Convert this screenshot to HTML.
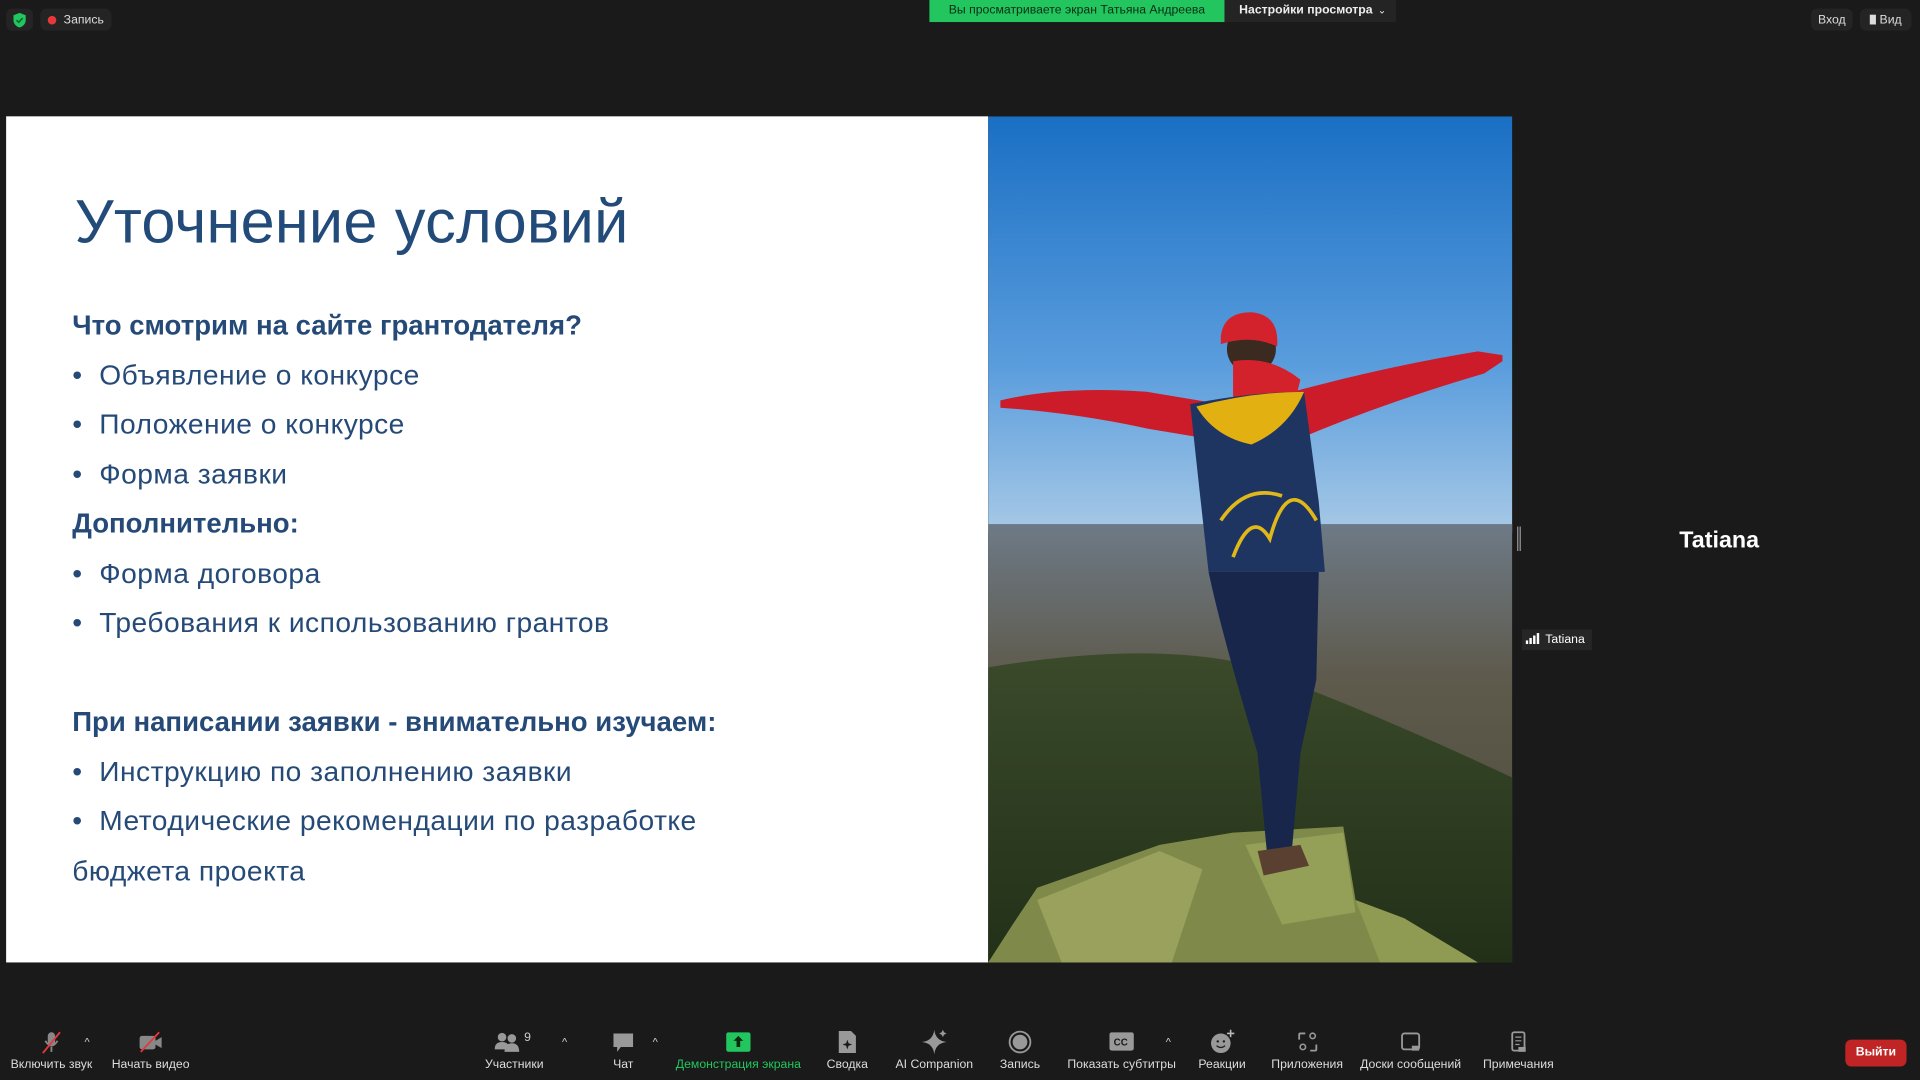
<!DOCTYPE html>
<html><head><meta charset="utf-8"><style>
html,body{margin:0;padding:0;background:#1a1a1a;overflow:hidden;width:1920px;height:1080px}
#w{position:absolute;left:0;top:0;width:1568px;height:882px;transform:scale(1.22449);transform-origin:0 0;font-family:"Liberation Sans","DejaVu Sans",sans-serif;color:#fff}
.abs{position:absolute}
.pill{position:absolute;background:#242424;border-radius:5px;font-size:10px;color:#ddd;display:flex;align-items:center}
.slide{position:absolute;left:5px;top:95px;width:802px;height:691px;background:#fff;color:#254a78}
.t{position:absolute;left:54px;white-space:nowrap}
.h{font-weight:bold;font-size:22.5px;letter-spacing:0}
.i{font-size:23px;letter-spacing:0.4px}
.tb{position:absolute;top:838px;height:44px;text-align:center;font-size:10px;color:#ddd;white-space:nowrap}
.tb .ic{height:26px;display:flex;justify-content:center;align-items:center}
.car{position:absolute;top:846px;font-size:9px;color:#ccc}
</style></head><body><div id="w">
<div class="pill" style="left:5px;top:7px;width:22px;height:18px;justify-content:center"><svg width="12" height="13" viewBox="0 0 12 13"><path d="M6 0.5L11 2.5V6.5C11 9.5 8.5 11.8 6 12.5C3.5 11.8 1 9.5 1 6.5V2.5Z" fill="#22c55e"/><path d="M3.5 6.5L5.3 8.2L8.5 4.8" stroke="#063" stroke-width="1.3" fill="none"/></svg></div>
<div class="pill" style="left:33px;top:7px;width:58px;height:18px"><span style="width:7px;height:7px;border-radius:50%;background:#e5383b;margin:0 6px 0 6px"></span>Запись</div>
<div class="abs" style="left:759px;top:0;width:241px;height:18px;background:#22c55e;color:#0b2e14;font-size:10px;text-align:center;line-height:18px">Вы просматриваете экран Татьяна Андреева</div>
<div class="abs" style="left:1000px;top:0;width:140px;height:18px;background:#242424;font-size:10px;line-height:18px;font-weight:bold;color:#eee;padding-left:12px;box-sizing:border-box">Настройки просмотра<span style="position:absolute;right:8px;font-weight:normal;font-size:8px">⌄</span></div>
<div class="pill" style="left:1479px;top:7px;width:34px;height:18px;justify-content:center">Вход</div>
<div class="pill" style="left:1519px;top:7px;width:42px;height:18px;justify-content:center"><span style="display:inline-block;width:5px;height:8px;background:#ddd;margin-right:3px"></span>Вид</div>
<div class="slide">
<div class="t" style="left:56px;top:57px;font-size:50px;letter-spacing:0.2px;color:#234b7a">Уточнение условий</div>
<div class="t h" style="top:158px">Что смотрим на сайте грантодателя?</div>
<div class="t i" style="top:198px">•&nbsp;&nbsp;Объявление о конкурсе</div>
<div class="t i" style="top:238px">•&nbsp;&nbsp;Положение о конкурсе</div>
<div class="t i" style="top:279px">•&nbsp;&nbsp;Форма заявки</div>
<div class="t h" style="top:320px">Дополнительно:</div>
<div class="t i" style="top:360px">•&nbsp;&nbsp;Форма договора</div>
<div class="t i" style="top:400px">•&nbsp;&nbsp;Требования к использованию грантов</div>
<div class="t h" style="top:482px">При написании заявки - внимательно изучаем:</div>
<div class="t i" style="top:522px">•&nbsp;&nbsp;Инструкцию по заполнению заявки</div>
<div class="t i" style="top:562px">•&nbsp;&nbsp;Методические рекомендации по разработке</div>
<div class="t i" style="top:603px">бюджета проекта</div>
</div>
<svg class="abs" style="left:807px;top:95px" width="428" height="691" viewBox="0 0 428 691">
<defs>
<linearGradient id="sky" x1="0" y1="0" x2="0" y2="1"><stop offset="0" stop-color="#1a6fc4"/><stop offset="0.6" stop-color="#5a9ddd"/><stop offset="1" stop-color="#a7c9e6"/></linearGradient>
<linearGradient id="land" x1="0" y1="0" x2="0" y2="1"><stop offset="0" stop-color="#6d7a86"/><stop offset="0.35" stop-color="#5e5a4c"/><stop offset="1" stop-color="#4a4a3a"/></linearGradient>
<linearGradient id="for" x1="0" y1="0" x2="0" y2="1"><stop offset="0" stop-color="#3a4a2a"/><stop offset="1" stop-color="#223018"/></linearGradient>
</defs>
<rect width="428" height="340" fill="url(#sky)"/>
<rect y="333" width="428" height="358" fill="url(#land)"/>
<path d="M0 450 Q120 430 200 445 Q300 480 428 540 V691 H0Z" fill="url(#for)"/>
<path d="M0 691 L20 660 L40 630 L140 595 L200 585 L290 580 L300 640 L340 660 L400 691Z" fill="#7f8a4a"/>
<path d="M40 640 L140 600 L175 615 L150 691 L60 691Z" fill="#a0a660" opacity="0.8"/>
<path d="M210 595 L290 585 L300 650 L240 660Z" fill="#9aa55a" opacity="0.8"/>
<path d="M300 640 L340 655 L400 691 L320 691Z" fill="#8f9a52"/>
<path d="M10 232 Q60 220 130 225 L190 235 L190 265 L130 255 Q70 242 10 238Z" fill="#cc1c2a"/>
<path d="M230 230 Q320 205 400 192 L420 195 L420 200 L405 210 Q320 235 250 265Z" fill="#cc1c2a"/>
<circle cx="215" cy="190" r="20" fill="#3a2a20"/>
<path d="M190 180 Q192 160 215 160 Q238 162 236 188 Q215 178 190 186Z" fill="#d4222c"/>
<path d="M200 200 Q230 195 255 215 L250 235 L200 235Z" fill="#d4222c"/>
<path d="M165 235 Q215 225 258 225 L270 315 L275 372 L180 372 L172 300Z" fill="#1f3561"/>
<path d="M170 237 Q215 225 258 225 Q245 255 215 268 Q185 262 170 237Z" fill="#e3b012"/>
<path d="M190 330 Q210 300 240 310 M200 360 Q215 320 230 345 Q245 290 268 330" stroke="#e0b81a" stroke-width="3" fill="none"/>
<path d="M180 372 L270 372 L268 460 L255 520 L248 600 L228 605 L220 520 Q190 420 180 372Z" fill="#17264a"/>
<path d="M220 600 L255 595 L262 612 L225 620Z" fill="#5a4030"/>
</svg>
<div class="abs" style="left:1239px;top:430px;height:20px;border-left:1px solid #999;border-right:1px solid #999;width:1px"></div>
<div class="abs" style="left:1344px;top:431px;width:120px;text-align:center;font-weight:bold;font-size:19px">Tatiana</div>
<div class="abs" style="left:1243px;top:514px;width:57px;height:17px;background:#262626;font-size:10px;line-height:17px;color:#fff"><span style="display:inline-block;margin:0 4px 0 3px;vertical-align:-1px"><svg width="12" height="9"><rect x="0" y="6" width="2" height="3" fill="#fff"/><rect x="3" y="4" width="2" height="5" fill="#fff"/><rect x="6" y="2" width="2" height="7" fill="#fff"/><rect x="9" y="0" width="2" height="9" fill="#fff"/></svg></span>Tatiana</div>
<div class="tb" style="left:5px;width:74px"><div class="ic"><svg width="20" height="20"><rect x="7" y="2" width="6" height="11" rx="3" fill="#888"/><path d="M5 9Q10 17 15 9M10 14V18" stroke="#888" fill="none" stroke-width="1.5"/><line x1="3" y1="19" x2="17" y2="2" stroke="#e5383b" stroke-width="1.5"/></svg></div>Включить звук</div>
<div class="car" style="left:69px">^</div>
<div class="tb" style="left:88px;width:70px"><div class="ic"><svg width="22" height="18"><rect x="2" y="4" width="13" height="11" rx="2" fill="#888"/><path d="M15 8L20 5V14L15 11Z" fill="#888"/><line x1="3" y1="17" x2="18" y2="1" stroke="#e5383b" stroke-width="1.5"/></svg></div>Начать видео</div>
<div class="tb" style="left:392px;width:56px"><div class="ic"><svg width="34" height="20"><circle cx="7" cy="6" r="3.5" fill="#999"/><path d="M1 16Q1 10 7 10Q13 10 13 16Z" fill="#999"/><circle cx="15" cy="7" r="3.5" fill="#999"/><path d="M9 18Q9 11 15 11Q21 11 21 18Z" fill="#999"/><text x="25" y="9" font-size="10" fill="#ccc" font-family="Liberation Sans">9</text></svg></div>Участники</div>
<div class="car" style="left:459px">^</div>
<div class="tb" style="left:494px;width:30px"><div class="ic"><svg width="20" height="20"><path d="M2 3H18V14H8L5 18V14H2Z" fill="#999"/></svg></div>Чат</div>
<div class="car" style="left:533px">^</div>
<div class="tb" style="left:548px;width:110px;color:#22c55e"><div class="ic"><svg width="20" height="16"><rect width="20" height="16" rx="2" fill="#22c55e"/><path d="M10 3L14 7H11.5V12H8.5V7H6Z" fill="#0a2a10"/></svg></div>Демонстрация экрана</div>
<div class="tb" style="left:672px;width:40px"><div class="ic"><svg width="16" height="20"><path d="M1 1H11L15 5V19H1Z" fill="#999"/><path d="M8 8L9 11L12 12L9 13L8 16L7 13L4 12L7 11Z" fill="#1a1a1a"/></svg></div>Сводка</div>
<div class="tb" style="left:728px;width:70px"><div class="ic"><svg width="22" height="22"><path d="M11 1Q12 10 21 11Q12 12 11 21Q10 12 1 11Q10 10 11 1Z" fill="#999"/><path d="M18 1L19 3L21 4L19 5L18 7L17 5L15 4L17 3Z" fill="#999"/></svg></div>AI Companion</div>
<div class="tb" style="left:813px;width:40px"><div class="ic"><svg width="20" height="20"><circle cx="10" cy="10" r="8.5" fill="none" stroke="#999" stroke-width="1.5"/><circle cx="10" cy="10" r="6" fill="#999"/></svg></div>Запись</div>
<div class="tb" style="left:870px;width:92px"><div class="ic"><svg width="20" height="16"><rect width="20" height="15" rx="2" fill="#999"/><text x="3.5" y="11" font-size="8" fill="#1a1a1a" font-family="Liberation Sans" font-weight="bold">CC</text></svg></div>Показать субтитры</div>
<div class="car" style="left:952px">^</div>
<div class="tb" style="left:976px;width:44px"><div class="ic"><svg width="22" height="22"><circle cx="10" cy="12" r="8" fill="#999"/><circle cx="7.5" cy="10.5" r="1" fill="#1a1a1a"/><circle cx="12.5" cy="10.5" r="1" fill="#1a1a1a"/><path d="M6.5 14Q10 17 13.5 14" stroke="#1a1a1a" fill="none"/><path d="M18 1V7M15 4H21" stroke="#bbb" stroke-width="1.3"/></svg></div>Реакции</div>
<div class="tb" style="left:1035px;width:65px"><div class="ic"><svg width="18" height="18"><path d="M2 7V3Q2 2 3 2H7M11 16H15Q16 16 16 15V11" stroke="#999" fill="none" stroke-width="1.5"/><circle cx="13" cy="4" r="2.2" stroke="#999" fill="none" stroke-width="1.3"/><circle cx="5" cy="13" r="2.2" stroke="#999" fill="none" stroke-width="1.3"/></svg></div>Приложения</div>
<div class="tb" style="left:1108px;width:88px"><div class="ic"><svg width="18" height="18"><rect x="2" y="2" width="14" height="13" rx="2" fill="none" stroke="#999" stroke-width="1.5"/><rect x="10" y="12" width="6" height="4" fill="#999"/></svg></div>Доски сообщений</div>
<div class="tb" style="left:1208px;width:64px"><div class="ic"><svg width="16" height="20"><rect x="3" y="2" width="10" height="15" rx="1.5" fill="none" stroke="#999" stroke-width="1.5"/><path d="M5.5 6H10.5M5.5 9H10.5M5.5 12H9" stroke="#999"/><rect x="8" y="14" width="6" height="4" fill="#999"/></svg></div>Примечания</div>
<div class="abs" style="left:1507px;top:849px;width:50px;height:22px;background:#c02424;border-radius:5px;text-align:center;line-height:22px;font-size:10px;font-weight:bold">Выйти</div>
</div></body></html>
